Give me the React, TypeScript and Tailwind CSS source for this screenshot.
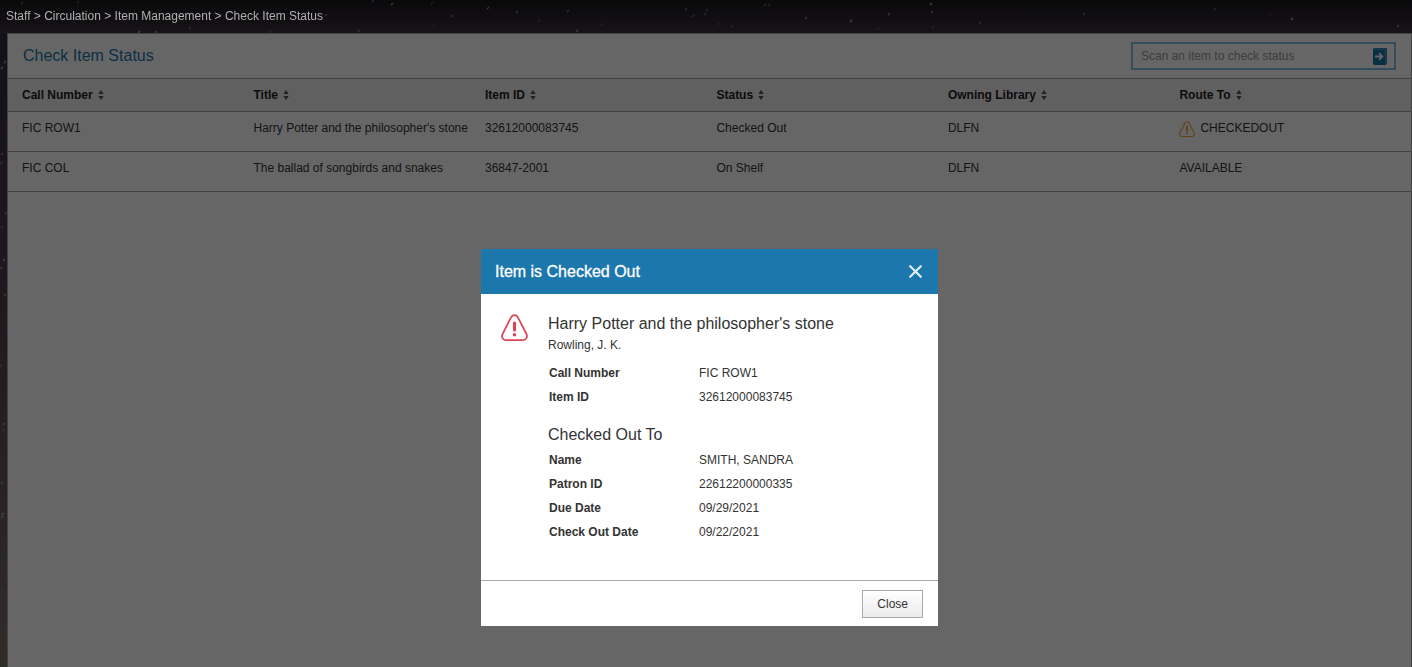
import { useState } from "react"

interface Item {
  callNumber: string
  title: string
  itemId: string
  status: string
  library: string
  routeTo: string
  warning?: boolean
}

const columns = ["Call Number", "Title", "Item ID", "Status", "Owning Library", "Route To"]

const items: Item[] = [
  {
    callNumber: "FIC ROW1",
    title: "Harry Potter and the philosopher's stone",
    itemId: "32612000083745",
    status: "Checked Out",
    library: "DLFN",
    routeTo: "CHECKEDOUT",
    warning: true,
  },
  {
    callNumber: "FIC COL",
    title: "The ballad of songbirds and snakes",
    itemId: "36847-2001",
    status: "On Shelf",
    library: "DLFN",
    routeTo: "AVAILABLE",
  },
]

const crumbs = ["Staff", "Circulation", "Item Management", "Check Item Status"]

// x, y, opacity
const stars = [
  [22, 3, 0.5], [78, 2, 0.4], [139, 32, 0.9], [156, 32, 0.8], [190, 28, 0.5], [270, 32, 0.4], [326, 15, 0.6],
  [373, 1, 0.6], [392, 4, 0.8], [432, 3, 0.4], [452, 16, 0.7], [434, 26, 0.3], [488, 8, 0.8], [517, 12, 0.7],
  [539, 21, 0.4], [568, 11, 0.6], [577, 31, 0.8], [602, 25, 0.3], [686, 9, 0.5], [693, 16, 0.5], [359, 31, 0.6],
  [705, 14, 0.5], [707, 10, 0.4], [718, 24, 0.3], [732, 26, 0.4], [765, 5, 0.5], [769, 5, 0.4], [806, 18, 0.6],
  [851, 21, 0.9], [889, 14, 0.8], [931, 4, 1], [932, 12, 0.7], [933, 27, 0.4], [980, 23, 0.5], [878, 29, 0.3],
  [1084, 14, 0.5], [1215, 9, 0.5], [1292, 19, 1], [1398, 26, 0.6], [1270, 14, 0.3],
  [5, 62, 0.9], [2, 68, 0.9], [2, 154, 0.6], [1, 163, 0.6], [6, 213, 0.7], [2, 227, 0.4], [4, 260, 0.9],
  [1, 268, 0.7], [5, 295, 0.8], [1, 366, 0.5], [4, 424, 0.8], [4, 430, 0.4], [2, 483, 0.6], [3, 514, 0.9],
  [2, 517, 0.7], [2, 592, 0.3],
]

function StarField() {
  return (
    <svg className="absolute inset-0 h-full w-full" aria-hidden="true">
      {stars.map(([x, y, o], i) => (
        <line
          key={i}
          x1={x - 0.7}
          y1={y + 0.8}
          x2={x + 0.7}
          y2={y - 0.8}
          stroke="#d8d4dc"
          strokeWidth="1.3"
          strokeLinecap="round"
          opacity={o * 0.75}
        />
      ))}
    </svg>
  )
}

function WarningIcon({ className }: { className: string }) {
  return (
    <svg viewBox="0 0 28 28" className={className} fill="none" stroke="currentColor" aria-hidden="true">
      <path
        d="M10.6 3.2 C12.1 0.5 15.9 0.5 17.4 3.2 L26.3 20.5 C27.9 23.7 26.2 27 22.8 27 L5.2 27 C1.8 27 0.1 23.7 1.7 20.5 Z"
        strokeWidth="1.8"
        strokeLinejoin="round"
      />
      <path d="M14 9.3 V16.6" strokeWidth="3.2" strokeLinecap="round" />
      <circle cx="14" cy="21.6" r="1.8" fill="currentColor" stroke="none" />
    </svg>
  )
}

function SortIcon() {
  return (
    <svg viewBox="0 0 6 10" className="h-[10px] w-[6px] text-[#555]" fill="currentColor" aria-hidden="true">
      <path d="M3 0 L5.7 4 H0.3 Z" />
      <path d="M3 10 L5.7 6 H0.3 Z" />
    </svg>
  )
}

function SubmitIcon() {
  return (
    <svg viewBox="0 0 14 17" className="h-[17px] w-[14px]" aria-hidden="true">
      <path d="M1.5 0 H14 V15.5 L12.5 17 H1.5 Q0 17 0 15.5 V1.5 Q0 0 1.5 0 Z" fill="#1b77ad" />
      <path d="M1.5 1.1 H12.8 V15.5" fill="none" stroke="#fff" strokeWidth="0.6" opacity="0.6" />
      <path d="M2 8.5 H9 M6 5.2 L9.4 8.5 L6 11.8" fill="none" stroke="#fff" strokeWidth="1.8" />
    </svg>
  )
}

function Detail({ label, value }: { label: string; value: string }) {
  return (
    <div className="flex h-6 items-center px-px">
      <dt className="w-[150px] font-bold">{label}</dt>
      <dd>{value}</dd>
    </div>
  )
}

function CheckedOutDialog({ onClose }: { onClose: () => void }) {
  return (
    <div className="fixed inset-0 z-10 flex items-start justify-center bg-black/60 pt-[249px] pl-[7px]">
      <div role="dialog" aria-modal="true" aria-labelledby="dialog-title" className="w-[457px] bg-white">
        <div className="flex h-[45px] items-center justify-between bg-[#1c77ac] pr-4 pl-[14px] text-white">
          <h2 id="dialog-title" className="text-base font-normal [-webkit-text-stroke:0.3px_white]">
            Item is Checked Out
          </h2>
          <button type="button" aria-label="Close dialog" onClick={onClose}>
            <svg viewBox="0 0 13 13" className="h-[13px] w-[13px]" stroke="#e3f0f8" strokeWidth="2.2" strokeLinecap="round">
              <path d="M1.2 1.2 L11.8 11.8 M11.8 1.2 L1.2 11.8" />
            </svg>
          </button>
        </div>
        <div className="flex gap-5 px-5 pt-5 pb-9">
          <WarningIcon className="h-[27px] w-[27px] shrink-0 text-[#dc4455]" />
          <div>
            <h3 className="text-base leading-5">Harry Potter and the philosopher's stone</h3>
            <p className="mt-[3px] leading-4">Rowling, J. K.</p>
            <dl className="mt-2">
              <Detail label="Call Number" value="FIC ROW1" />
              <Detail label="Item ID" value="32612000083745" />
            </dl>
            <h3 className="mt-4 mb-[3px] text-base leading-5">Checked Out To</h3>
            <dl>
              <Detail label="Name" value="SMITH, SANDRA" />
              <Detail label="Patron ID" value="22612200000335" />
              <Detail label="Due Date" value="09/29/2021" />
              <Detail label="Check Out Date" value="09/22/2021" />
            </dl>
          </div>
        </div>
        <div className="flex justify-end border-t border-[#aaa] px-[15px] pt-[9px] pb-2">
          <button
            type="button"
            onClick={onClose}
            className="h-7 border border-[#aaa] bg-linear-to-b from-white to-[#ebebeb] px-[14px]"
          >
            Close
          </button>
        </div>
      </div>
    </div>
  )
}

export default function App() {
  const [open, setOpen] = useState(true)
  const [query, setQuery] = useState("")

  return (
    <div className="relative flex min-h-screen flex-col bg-linear-to-b from-[#30273a] via-[#524350] to-[#777069] font-['Liberation_Sans',Arial,sans-serif] text-xs text-[#333]">
      <div className="absolute inset-x-0 top-0 h-[33px] bg-linear-to-b from-[#18161a] to-[#3c323c]" />
      <StarField />

      {/* stays readable above the dialog backdrop */}
      <nav aria-label="Breadcrumb" className="relative z-20 h-[33px] px-[6px] pt-2 leading-4 text-[#b0b0b0]">
        {crumbs.map((crumb, i) => (
          <span key={crumb}>
            {i > 0 && " > "}
            <a href="#">{crumb}</a>
          </span>
        ))}
      </nav>

      <main className="relative ml-[7px] flex-1 border border-b-0 border-[#a6a6a6] bg-white">
        <div className="flex h-[44px] items-center justify-between px-[15px]">
          <h1 className="text-base text-[#1c77ac]">Check Item Status</h1>
          <form
            onSubmit={(e) => {
              e.preventDefault()
              setOpen(true)
            }}
            className="flex h-7 w-[265px] items-center border-2 border-[#7cc4ee] pr-[7px] pl-2"
          >
            <input
              type="text"
              aria-label="Scan an item to check status"
              placeholder="Scan an item to check status"
              value={query}
              onChange={(e) => setQuery(e.target.value)}
              className="min-w-0 flex-1 outline-none placeholder:text-[#999]"
            />
            <button type="submit" aria-label="Check status">
              <SubmitIcon />
            </button>
          </form>
        </div>

        <table className="w-full table-fixed text-left">
          <thead>
            <tr className="h-[33px] border-y border-[#a6a6a6] bg-[#f0f0f0] text-[#222]">
              {columns.map((col) => (
                <th key={col} scope="col" className="w-[16.5%] px-[14px] last:w-[17.5%]">
                  <button type="button" className="flex items-center gap-[5px] font-bold">
                    {col}
                    <SortIcon />
                  </button>
                </th>
              ))}
            </tr>
          </thead>
          <tbody>
            {items.map((item) => (
              <tr key={item.itemId} className="h-10 border-b border-[#a6a6a6] align-top leading-4">
                <td className="px-[14px] pt-2">{item.callNumber}</td>
                <td className="pt-2 pl-[14px] whitespace-nowrap">{item.title}</td>
                <td className="px-[14px] pt-2">{item.itemId}</td>
                <td className="px-[14px] pt-2">{item.status}</td>
                <td className="px-[14px] pt-2">{item.library}</td>
                <td className="px-[14px] pt-2">
                  <span className="flex gap-[5px]">
                    {item.warning && <WarningIcon className="mt-px h-4 w-4 text-[#f5a030]" />}
                    {item.routeTo}
                  </span>
                </td>
              </tr>
            ))}
          </tbody>
        </table>
      </main>

      {open && <CheckedOutDialog onClose={() => setOpen(false)} />}
    </div>
  )
}
